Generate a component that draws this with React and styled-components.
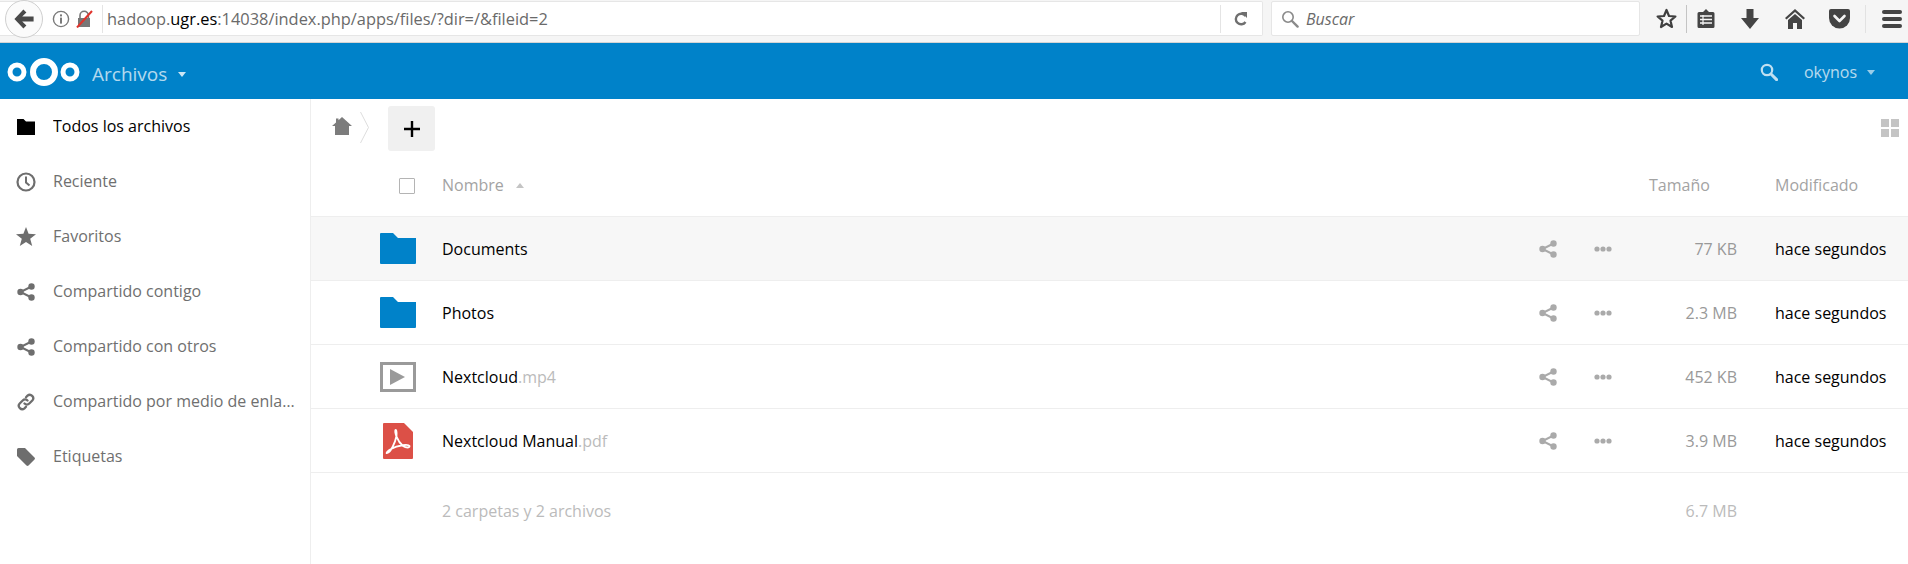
import React from "react";
import styled, { createGlobalStyle } from "styled-components";

const GlobalStyle = createGlobalStyle`
  html, body {
    margin: 0;
    padding: 0;
    height: 564px;
    overflow: hidden;
    background: #fff;
    font-family: "Open Sans", "Liberation Sans", sans-serif;
  }
  * { box-sizing: border-box; }
`;

// Browser chrome icons
const BackArrow = () => (
  <svg width="24" height="24" viewBox="0 0 20 20">
    <path d="M9.5 2 L2 10 L9.5 18 L12 15.5 L8.5 12 H18 V8 H8.5 L12 4.5 Z" fill="#4a4a4a" />
  </svg>
);
const InfoIcon = () => (
  <svg width="18" height="18" viewBox="0 0 18 18">
    <circle cx="9" cy="9" r="7.6" fill="none" stroke="#7a7a7a" strokeWidth="1.4" />
    <rect x="8" y="7.6" width="2" height="6" fill="#7a7a7a" />
    <rect x="8" y="4.4" width="2" height="2" fill="#7a7a7a" />
  </svg>
);
const BrokenLock = () => (
  <svg width="17" height="18" viewBox="0 0 17 18">
    <path d="M4 8 V5.5 A4.2 4.2 0 0 1 12.4 5.5 V8" fill="none" stroke="#777" strokeWidth="1.6" />
    <rect x="2" y="8" width="12" height="9" fill="#777" />
    <path d="M1 17.5 L16 1" stroke="#e0342c" strokeWidth="2" />
  </svg>
);
const ReloadIcon = () => (
  <svg width="13" height="16" viewBox="0 0 13 16">
    <path d="M11.5 5 A5.3 5.3 0 1 0 11.5 11" fill="none" stroke="#6f6f6f" strokeWidth="2.4" />
    <path d="M7 1 H13 V7 Z" fill="#6f6f6f" />
  </svg>
);
const LensIcon = ({ color, stroke = 1.6 }) => (
  <svg width="18" height="18" viewBox="0 0 18 18">
    <circle cx="7" cy="7" r="5.2" fill="none" stroke={color} strokeWidth={stroke} />
    <path d="M11 11 L16.6 16.6" stroke={color} strokeWidth={stroke + 0.8} strokeLinecap="round" />
  </svg>
);
const StarOutline = () => (
  <svg width="21" height="21" viewBox="0 0 21 21">
    <path d="M10.5 2 L13 8 L19.4 8.5 L14.5 12.7 L16 19 L10.5 15.6 L5 19 L6.5 12.7 L1.6 8.5 L8 8 Z" fill="none" stroke="#3f3f3f" strokeWidth="2.2" strokeLinejoin="round" />
  </svg>
);
const ClipboardIcon = () => (
  <svg width="18" height="21" viewBox="0 0 18 21">
    <path d="M2 4 H6 L9 1 L12 4 H16 A1.5 1.5 0 0 1 17.500 5.500 V18.500 A1.500 1.500 0 0 1 16 20 H2 A1.500 1.500 0 0 1 0.500 18.500 V5.500 A1.500 1.500 0 0 1 2 4 Z" fill="#444" />
    <path d="M3 8 H15 M3 11.500 H15 M3 15 H15" stroke="#f5f5f5" strokeWidth="1.400" />
    <path d="M6 7 V17" stroke="#f5f5f5" strokeWidth="1.200" />
  </svg>
);
const DownloadIcon = () => (
  <svg width="18" height="20" viewBox="0 0 18 20">
    <path d="M5.500 0 H12.500 V9 H18 L9 20 L0 9 H5.500 Z" fill="#444" />
  </svg>
);
const HomeChrome = () => (
  <svg width="20" height="20" viewBox="0 0 20 20">
    <path d="M10 0 L20 9 L18.500 10.500 L10 3 L1.500 10.500 L0 9 Z" fill="#444" />
    <path d="M10 5 L17 11 V20 H12 V14 H8 V20 H3 V11 Z" fill="#444" />
  </svg>
);
const PocketIcon = () => (
  <svg width="21" height="20" viewBox="0 0 21 20">
    <path d="M2 0 H19 A2 2 0 0 1 21 2 V9 A10.500 10.500 0 0 1 0 9 V2 A2 2 0 0 1 2 0 Z" fill="#444" />
    <path d="M5.500 7 L10.500 12 L15.500 7" fill="none" stroke="#f5f5f5" strokeWidth="2.600" strokeLinecap="round" strokeLinejoin="round" />
  </svg>
);
const BurgerIcon = () => (
  <svg width="20" height="18" viewBox="0 0 20 18">
    <rect y="0" width="20" height="4" rx="2" fill="#444" />
    <rect y="7" width="20" height="4" rx="2" fill="#444" />
    <rect y="14" width="20" height="4" rx="2" fill="#444" />
  </svg>
);

// Nextcloud icons
const Logo = () => (
  <svg width="74" height="30" viewBox="0 0 74 30">
    <circle cx="11" cy="15" r="7" fill="none" stroke="#fff" strokeWidth="5" />
    <circle cx="38" cy="15" r="11" fill="none" stroke="#fff" strokeWidth="6" />
    <circle cx="64" cy="15" r="7" fill="none" stroke="#fff" strokeWidth="5" />
  </svg>
);
const FolderNav = () => (
  <svg width="18" height="16" viewBox="0 0 18 16">
    <path d="M0 0 H6.500 L9 2.500 H18 V16 H0 Z" fill="#000" />
  </svg>
);
const ClockIcon = () => (
  <svg width="20" height="20" viewBox="0 0 20 20">
    <circle cx="10" cy="10" r="8.500" fill="none" stroke="#6e6e6e" strokeWidth="2.200" />
    <path d="M10 4.500 V10.500 L13.500 13.500" fill="none" stroke="#6e6e6e" strokeWidth="2" />
  </svg>
);
const StarIcon = () => (
  <svg width="20" height="19" viewBox="0 0 20 19">
    <path d="M10 0 L12.600 6.700 L20 7.200 L14.200 11.800 L16.200 19 L10 15 L3.800 19 L5.800 11.800 L0 7.200 L7.400 6.700 Z" fill="#6e6e6e" />
  </svg>
);
const ShareIcon = ({ color = "#6e6e6e" }) => (
  <svg width="18" height="18" viewBox="0 0 18 18">
    <path d="M14.500 3.500 L3.500 9 L14.500 14.500" fill="none" stroke={color} strokeWidth="2" />
    <circle cx="14.500" cy="3.500" r="3.200" fill={color} />
    <circle cx="3.500" cy="9" r="3.200" fill={color} />
    <circle cx="14.500" cy="14.500" r="3.200" fill={color} />
  </svg>
);
const LinkIcon = () => (
  <svg width="18" height="18" viewBox="0 0 18 18">
    <path d="M7.500 10.500 A3.400 3.400 0 0 0 12.300 10.500 L15.300 7.500 A3.400 3.400 0 0 0 10.500 2.700 L9 4.200" fill="none" stroke="#6e6e6e" strokeWidth="2.300" strokeLinecap="round" />
    <path d="M10.500 7.500 A3.400 3.400 0 0 0 5.700 7.500 L2.700 10.500 A3.400 3.400 0 0 0 7.500 15.300 L9 13.800" fill="none" stroke="#6e6e6e" strokeWidth="2.300" strokeLinecap="round" />
  </svg>
);
const TagIcon = () => (
  <svg width="18" height="18" viewBox="0 0 18 18">
    <path d="M0 1.500 A1.500 1.500 0 0 1 1.500 0 H8 L17.500 9.500 A1.500 1.500 0 0 1 17.500 11.500 L11.500 17.500 A1.500 1.500 0 0 1 9.500 17.500 L0 8 Z" fill="#6e6e6e" />
  </svg>
);
const HomeIcon = () => (
  <svg width="20" height="18" viewBox="0 0 20 18">
    <path d="M10 0 L20 9 H17 V18 H3 V9 H0 L4 5.400 V1.500 H6.500 V3.200 Z" fill="#7c7c7c" />
  </svg>
);
const Chevron = () => (
  <svg width="9" height="31" viewBox="0 0 9 31">
    <path d="M0.500 0 L8.500 15.500 L0.500 31" fill="none" stroke="#ddd" strokeWidth="1" />
  </svg>
);
const PlusIcon = () => (
  <svg width="16" height="16" viewBox="0 0 16 16">
    <path d="M8 0 V16 M0 8 H16" stroke="#000" strokeWidth="2.400" />
  </svg>
);
const GridIcon = () => (
  <svg width="18" height="18" viewBox="0 0 18 18">
    <rect width="8" height="8" fill="#c4c4c4" />
    <rect x="10" width="8" height="8" fill="#c4c4c4" />
    <rect y="10" width="8" height="8" fill="#c4c4c4" />
    <rect x="10" y="10" width="8" height="8" fill="#c4c4c4" />
  </svg>
);
const DotsIcon = () => (
  <svg width="18" height="6" viewBox="0 0 18 6">
    <circle cx="3" cy="3" r="2.600" fill="#aaa" />
    <circle cx="9" cy="3" r="2.600" fill="#aaa" />
    <circle cx="15" cy="3" r="2.600" fill="#aaa" />
  </svg>
);
const FolderFile = () => (
  <svg width="36" height="31" viewBox="0 0 36 31">
    <path d="M0 1 A1 1 0 0 1 1 0 H13 L18 5 H36 V30 A1 1 0 0 1 35 31 H1 A1 1 0 0 1 0 30 Z" fill="#0082c9" />
  </svg>
);
const VideoFile = () => (
  <svg width="36" height="30" viewBox="0 0 36 30">
    <rect x="1.500" y="1.500" width="33" height="27" fill="none" stroke="#9a9a9a" strokeWidth="3" />
    <path d="M10 7 L25 15 L10 23 Z" fill="#9a9a9a" />
  </svg>
);
const PdfFile = () => (
  <svg width="30" height="36" viewBox="0 0 30 36">
    <path d="M1 0 H21 L30 9 V35 A1 1 0 0 1 29 36 H1 A1 1 0 0 1 0 35 V1 A1 1 0 0 1 1 0 Z" fill="#dc5047" />
    <path d="M4 30 C8 29 12 20 13.500 13 C14 9 13 6 12.500 7 C11.500 9 14 18 20 23 C23 25 27 25 26.500 23 C25.500 21 15 22 8 26 C4 28 3 31 4 30 Z" fill="none" stroke="#fff" strokeWidth="1.800" />
  </svg>
);

const Page = styled.div`
  width: 1908px;
  height: 564px;
  display: flex;
  flex-direction: column;
`;

const BrowserBar = styled.div`
  height: 43px;
  flex: none;
  display: flex;
  align-items: flex-start;
  padding-top: 1px;
  background: #f5f5f5;
  border-bottom: 1px solid #d4d4d4;
`;
const AddressBox = styled.div`
  width: 1263px;
  height: 35px;
  display: flex;
  align-items: center;
  background: #fff;
  border: 1px solid #e6e6e6;
  border-left: none;
  border-radius: 0 2px 2px 0;
`;
const BackButton = styled.div`
  width: 38px;
  height: 38px;
  margin: 0 0 0 5px;
  flex: none;
  display: flex;
  align-items: center;
  justify-content: center;
  background: #fbfbfb;
  border: 1px solid #cfcfcf;
  border-radius: 50%;
`;
const Slot = styled.span`
  display: flex;
  flex: none;
  margin-left: ${(p) => p.$left || 0}px;
`;
const BarDivider = styled.span`
  width: 1px;
  height: 28px;
  flex: none;
  margin-left: ${(p) => p.$left}px;
  background: ${(p) => p.$color || "#e4e4e4"};
`;
const Url = styled.div`
  flex: 1;
  margin-left: 4px;
  font-size: 16.4px;
  color: #6a6a6a;
  white-space: nowrap;
  b {
    font-weight: 400;
    color: #000;
  }
`;
const SearchBox = styled.div`
  width: 369px;
  height: 35px;
  margin-left: 8px;
  padding-left: 9px;
  display: flex;
  align-items: center;
  background: #fff;
  border: 1px solid #e6e6e6;
  border-radius: 2px;
  font-size: 16px;
  font-style: italic;
  color: #6a6a6a;
`;
const SearchHint = styled.span`
  margin-left: 7px;
`;
const ToolRow = styled.div`
  height: 35px;
  display: flex;
  align-items: center;
`;

const Header = styled.header`
  height: 56px;
  flex: none;
  display: flex;
  align-items: center;
  padding-top: 2px;
  background: #0082c9;
  color: #fff;
`;
const LogoLink = styled.div`
  display: flex;
  margin-left: 6px;
`;
const AppMenu = styled.div`
  display: flex;
  align-items: center;
  padding-top: 4px;
`;
const AppName = styled.div`
  margin-left: 12px;
  font-size: 19px;
  opacity: 0.7;
`;
const Caret = styled.span`
  width: 0;
  height: 0;
  margin-left: ${(p) => p.$left}px;
  border-left: 4.500px solid transparent;
  border-right: 4.500px solid transparent;
  border-top: 5px solid ${(p) => p.$color || "rgba(255,255,255,0.8)"};
  transform: ${(p) => (p.$up ? "rotate(180deg)" : "none")};
`;
const HeaderRight = styled.div`
  margin-left: auto;
  margin-right: 33px;
  display: flex;
  align-items: center;
  opacity: 0.75;
`;
const UserName = styled.div`
  margin-left: 26px;
  font-size: 16px;
  opacity: 0.95;
`;

const Body = styled.div`
  flex: 1;
  display: flex;
  min-height: 0;
`;
const Sidebar = styled.nav`
  width: 311px;
  flex: none;
  border-right: 1px solid #eee;
`;
const NavItem = styled.div`
  height: 55px;
  display: flex;
  align-items: center;
  font-size: 16px;
  color: ${(p) => (p.$active ? "#000" : "#6f6f6f")};
`;
const NavIcon = styled.span`
  width: 53px;
  flex: none;
  display: flex;
  justify-content: center;
  padding-right: 1px;
`;
const NavLabel = styled.span`
  width: 245px;
  padding-bottom: 1px;
  white-space: nowrap;
  overflow: hidden;
  text-overflow: ellipsis;
`;

const Main = styled.main`
  flex: 1;
  min-width: 0;
`;
const Controls = styled.div`
  height: 53px;
  display: flex;
  align-items: flex-start;
  padding: 7px 9px 0 21px;
`;
const Crumb = styled.span`
  display: flex;
  flex: none;
  margin: ${(p) => p.$top}px 0 0 ${(p) => p.$left}px;
`;
const AddButton = styled.button`
  width: 47px;
  height: 45px;
  margin-left: 19px;
  padding: 0;
  display: flex;
  align-items: center;
  justify-content: center;
  background: #f0f0f0;
  border: none;
  border-radius: 3px;
`;
const ViewToggle = styled.span`
  margin: 13px 0 0 auto;
  display: flex;
`;

const Row = styled.div`
  height: ${(p) => p.$height || 64}px;
  display: flex;
  align-items: center;
  padding: ${(p) => p.$top || 0}px 0 ${(p) => p.$bottom || 0}px 69px;
  font-size: 16px;
  color: #000;
  background: ${(p) => (p.$hover ? "#f7f7f7" : "#fff")};
  border-bottom: ${(p) => (p.$flat ? "none" : "1px solid #eee")};
`;
const FileIcon = styled.span`
  width: 36px;
  flex: none;
  display: flex;
  justify-content: center;
`;
const CheckBox = styled.span`
  width: 16px;
  height: 16px;
  border: 1.500px solid #b4b4b4;
  border-radius: 1px;
  margin: 2px 0 0 17px;
`;
const Name = styled.div`
  flex: 1;
  min-width: 0;
  margin-left: 26px;
  display: flex;
  align-items: center;
  color: ${(p) => p.$color || "#000"};
`;
const Ext = styled.span`
  color: #bbb;
`;
const Action = styled.span`
  width: 18px;
  flex: none;
  display: flex;
  margin-left: ${(p) => p.$left || 0}px;
`;
const Size = styled.div`
  width: 125px;
  flex: none;
  text-align: right;
  color: ${(p) => p.$color || "#999"};
`;
const Modified = styled.div`
  width: 133px;
  flex: none;
  margin-left: 38px;
`;
const HeadLabel = styled.div`
  flex: none;
  color: #a3a3a3;
  margin-right: ${(p) => p.$right || 0}px;
  width: ${(p) => p.$width || 0}px;
`;

const navItems = [
  { label: "Todos los archivos", icon: <FolderNav />, active: true },
  { label: "Reciente", icon: <ClockIcon /> },
  { label: "Favoritos", icon: <StarIcon /> },
  { label: "Compartido contigo", icon: <ShareIcon /> },
  { label: "Compartido con otros", icon: <ShareIcon /> },
  { label: "Compartido por medio de enlace", icon: <LinkIcon /> },
  { label: "Etiquetas", icon: <TagIcon /> },
];

const files = [
  { name: "Documents", size: "77 KB", icon: <FolderFile />, hover: true },
  { name: "Photos", size: "2.3 MB", icon: <FolderFile /> },
  { name: "Nextcloud", ext: ".mp4", size: "452 KB", icon: <VideoFile /> },
  { name: "Nextcloud Manual", ext: ".pdf", size: "3.9 MB", icon: <PdfFile /> },
];

export default function App() {
  return (
    <Page>
      <GlobalStyle />
      <BrowserBar>
        <AddressBox>
          <BackButton><BackArrow /></BackButton>
          <Slot $left={9}><InfoIcon /></Slot>
          <Slot $left={6}><BrokenLock /></Slot>
          <BarDivider $left={9} />
          <Url>hadoop.<b>ugr.es</b>:14038/index.php/apps/files/?dir=/&amp;fileid=2</Url>
          <BarDivider $left={0} />
          <Slot $left={13}><ReloadIcon /></Slot>
          <Slot $left={15} />
        </AddressBox>
        <SearchBox>
          <LensIcon color="#8a8a8a" />
          <SearchHint>Buscar</SearchHint>
        </SearchBox>
        <ToolRow>
          <Slot $left={16}><StarOutline /></Slot>
          <BarDivider $left={9} $color="#c4c4c4" />
          <Slot $left={10}><ClipboardIcon /></Slot>
          <Slot $left={26}><DownloadIcon /></Slot>
          <Slot $left={26}><HomeChrome /></Slot>
          <Slot $left={24}><PocketIcon /></Slot>
          <BarDivider $left={15} $color="#e2e2e2" />
          <Slot $left={16}><BurgerIcon /></Slot>
        </ToolRow>
      </BrowserBar>

      <Header>
        <LogoLink><Logo /></LogoLink>
        <AppMenu>
          <AppName>Archivos</AppName>
          <Caret $left={11} />
        </AppMenu>
        <HeaderRight>
          <LensIcon color="#fff" stroke={2.2} />
          <UserName>okynos</UserName>
          <Caret $left={10} />
        </HeaderRight>
      </Header>

      <Body>
        <Sidebar>
          {navItems.map((item) => (
            <NavItem key={item.label} $active={item.active}>
              <NavIcon>{item.icon}</NavIcon>
              <NavLabel>{item.label}</NavLabel>
            </NavItem>
          ))}
        </Sidebar>
        <Main>
          <Controls>
            <Crumb $top={11} $left={0}><HomeIcon /></Crumb>
            <Crumb $top={6} $left={8}><Chevron /></Crumb>
            <AddButton><PlusIcon /></AddButton>
            <ViewToggle><GridIcon /></ViewToggle>
          </Controls>
          <Row $height={65} $top={2}>
            <FileIcon><CheckBox /></FileIcon>
            <Name $color="#a3a3a3">
              Nombre
              <Caret $left={12} $color="#c4c4c4" $up />
            </Name>
            <HeadLabel $width={61} $right={65}>Tamaño</HeadLabel>
            <HeadLabel $width={133}>Modificado</HeadLabel>
          </Row>
          {files.map((file) => (
            <Row key={file.name} $hover={file.hover}>
              <FileIcon>{file.icon}</FileIcon>
              <Name>
                {file.name}
                {file.ext && <Ext>{file.ext}</Ext>}
              </Name>
              <Action><ShareIcon color="#aaa" /></Action>
              <Action $left={37}><DotsIcon /></Action>
              <Size>{file.size}</Size>
              <Modified>hace segundos</Modified>
            </Row>
          ))}
          <Row $height={78} $flat $bottom={2}>
            <FileIcon />
            <Name $color="#bbb">2 carpetas y 2 archivos</Name>
            <Size $color="#bbb">6.7 MB</Size>
            <Modified />
          </Row>
        </Main>
      </Body>
    </Page>
  );
}
